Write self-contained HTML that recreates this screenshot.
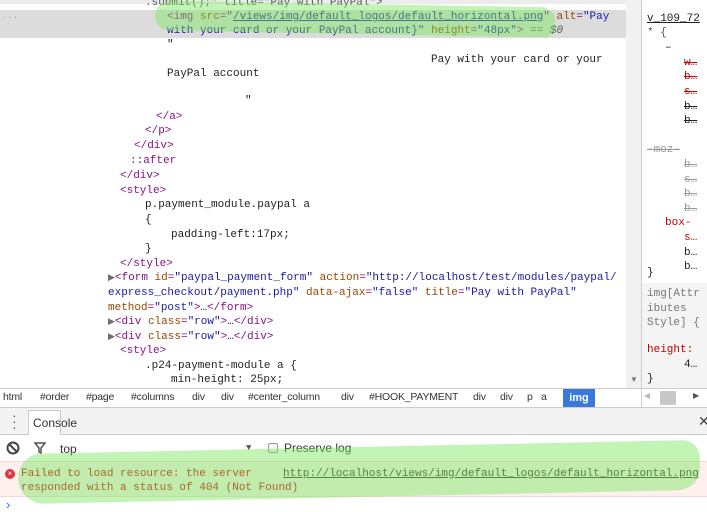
<!DOCTYPE html>
<html><head><meta charset="utf-8"><style>
*{margin:0;padding:0;box-sizing:border-box}
body{width:707px;height:511px;overflow:hidden;background:#fff;position:relative;font-family:"Liberation Mono",monospace;font-size:11px;color:#222}
.l{position:absolute;white-space:pre;line-height:14px;height:14px}
.t{color:#881280}.an{color:#994500}.av{color:#1a1aa6}.g{color:#a0a0a0}
.ln{text-decoration:underline;color:#1a1aa6}
.sans{font-family:"Liberation Sans",sans-serif}
.tri{color:#6e6e6e;font-size:9px}
.r{position:absolute;white-space:pre;line-height:14.7px;font-size:11px}
.red{color:#c80000;text-decoration:line-through}
.gr{color:#999;text-decoration:line-through}
.bc{position:absolute;top:391px;font-family:"Liberation Sans",sans-serif;font-size:10.5px;letter-spacing:-0.2px;color:#333;white-space:pre}
</style></head><body>
<div style="position:absolute;left:0;top:0;width:641px;height:4px;background:#ececec"></div>
<div style="position:absolute;left:0;top:10px;width:626px;height:28px;background:#dcdcdc"></div>
<div class="l g" style="left:2px;top:11px;font-size:9px">···</div>
<div class="l" style="left:145px;top:-4px;color:#555">.submit();" title="Pay with PayPal"&gt;</div>
<div class="l" style="left:167px;top:10px"><span class="t">&lt;img</span> <span class="an">src</span><span class="t">="</span><span class="ln">/views/img/default_logos/default_horizontal.png</span><span class="t">"</span> <span class="an">alt</span><span class="t">=</span><span class="av">"Pay</span></div>
<div class="l" style="left:167px;top:24px"><span class="av">with your card or your PayPal account}"</span> <span class="an">height</span><span class="t">=</span><span class="av">"48px"</span><span class="t">&gt;</span> <span style="color:#555">== <i>$0</i></span></div>
<div class="l" style="left:167px;top:38px">"</div>
<div class="l" style="left:431px;top:53px">Pay with your card or your</div>
<div class="l" style="left:167px;top:67px">PayPal account</div>
<div class="l" style="left:245px;top:94px">"</div>
<div class="l t" style="left:156px;top:110px">&lt;/a&gt;</div>
<div class="l t" style="left:145px;top:124px">&lt;/p&gt;</div>
<div class="l t" style="left:134px;top:139px">&lt;/div&gt;</div>
<div class="l t" style="left:130px;top:154px">::after</div>
<div class="l t" style="left:120px;top:169px">&lt;/div&gt;</div>
<div class="l t" style="left:120px;top:184px">&lt;style&gt;</div>
<div class="l" style="left:145px;top:198px">p.payment_module.paypal a</div>
<div class="l" style="left:145px;top:213px">{</div>
<div class="l" style="left:171px;top:228px">padding-left:17px;</div>
<div class="l" style="left:145px;top:242px">}</div>
<div class="l t" style="left:120px;top:257px">&lt;/style&gt;</div>
<div class="l" style="left:108px;top:271px"><span class="tri">▶</span><span class="t">&lt;form</span> <span class="an">id</span><span class="t">=</span><span class="av">"paypal_payment_form"</span> <span class="an">action</span><span class="t">=</span><span class="av">"http://localhost/test/modules/paypal/</span></div>
<div class="l av" style="left:108px;top:286px">express_checkout/payment.php" <span class="an">data-ajax</span><span class="t">=</span>"false" <span class="an">title</span><span class="t">=</span>"Pay with PayPal"</div>
<div class="l" style="left:108px;top:301px"><span class="an">method</span><span class="t">=</span><span class="av">"post"</span><span class="t">&gt;</span>…<span class="t">&lt;/form&gt;</span></div>
<div class="l" style="left:108px;top:315px"><span class="tri">▶</span><span class="t">&lt;div</span> <span class="an">class</span><span class="t">=</span><span class="av">"row"</span><span class="t">&gt;</span>…<span class="t">&lt;/div&gt;</span></div>
<div class="l" style="left:108px;top:330px"><span class="tri">▶</span><span class="t">&lt;div</span> <span class="an">class</span><span class="t">=</span><span class="av">"row"</span><span class="t">&gt;</span>…<span class="t">&lt;/div&gt;</span></div>
<div class="l t" style="left:120px;top:344px">&lt;style&gt;</div>
<div class="l" style="left:145px;top:359px">.p24-payment-module a {</div>
<div class="l" style="left:171px;top:373px">min-height: 25px;</div>
<div style="position:absolute;left:626px;top:0;width:15px;height:388px;background:#f1f1f1"></div>
<div style="position:absolute;left:630px;top:375px;font-size:8px;color:#777;font-family:'Liberation Sans'">▼</div>
<div style="position:absolute;left:641px;top:0;width:1px;height:407px;background:#ccc"></div>
<div style="position:absolute;left:642px;top:0;width:65px;height:388px;background:#fff;overflow:hidden">
<div class="r" style="left:5px;top:12px;text-decoration:underline;color:#222">v_109_72</div>
<div class="r" style="left:5px;top:26px;color:#555">* {</div>
<div class="r" style="left:23px;top:41px">–</div>
<div class="r red" style="left:42px;top:56px">w…</div>
<div class="r red" style="left:42px;top:70px">b…</div>
<div class="r red" style="left:42px;top:85px">s…</div>
<div class="r" style="left:42px;top:100px;text-decoration:line-through">b…</div>
<div class="r" style="left:42px;top:114px;text-decoration:line-through">b…</div>
<div class="r gr" style="left:5px;top:143px">-moz-</div>
<div class="r gr" style="left:42px;top:158px">b…</div>
<div class="r gr" style="left:42px;top:173px">s…</div>
<div class="r gr" style="left:42px;top:187px">b…</div>
<div class="r gr" style="left:42px;top:202px">b…</div>
<div class="r" style="left:23px;top:216px;color:#c80000">box-</div>
<div class="r" style="left:42px;top:231px;color:#c80000">s…</div>
<div class="r" style="left:42px;top:246px">b…</div>
<div class="r" style="left:42px;top:260px">b…</div>
<div class="r" style="left:5px;top:266px">}</div>
<div style="position:absolute;left:0;top:283px;width:65px;height:105px;background:#f4f4f4"></div>
<div class="r" style="left:5px;top:287px;color:#777">img[Attr<br>ibutes<br>Style] {</div>
<div class="r" style="left:5px;top:343px;color:#c80000">height:</div>
<div class="r" style="left:42px;top:358px">4…</div>
<div class="r" style="left:5px;top:372px">}</div>
</div>
<div style="position:absolute;left:0;top:388px;width:707px;height:1px;background:#ccc"></div>
<div style="position:absolute;left:0;top:389px;width:641px;height:18px;background:#fff"></div>
<div class="bc" style="left:3px">html</div>
<div class="bc" style="left:40px">#order</div>
<div class="bc" style="left:86px">#page</div>
<div class="bc" style="left:131px">#columns</div>
<div class="bc" style="left:192px">div</div>
<div class="bc" style="left:221px">div</div>
<div class="bc" style="left:248px">#center_column</div>
<div class="bc" style="left:341px">div</div>
<div class="bc" style="left:369px">#HOOK_PAYMENT</div>
<div class="bc" style="left:473px">div</div>
<div class="bc" style="left:500px">div</div>
<div class="bc" style="left:527px">p</div>
<div class="bc" style="left:541px">a</div>
<div class="sans" style="position:absolute;left:563px;top:389px;width:32px;height:18px;background:#3879d9;color:#fff;font-size:11px;font-weight:bold;text-align:center;line-height:18px">img</div>
<div style="position:absolute;left:641px;top:389px;width:1px;height:18px;background:#ccc"></div>
<div style="position:absolute;left:644px;top:391px;font-size:8px;color:#bbb">◀</div>
<div style="position:absolute;left:660px;top:391px;width:16px;height:14px;background:#c8c8c8"></div>
<div style="position:absolute;left:693px;top:391px;font-size:8px;color:#555">▶</div>
<div style="position:absolute;left:0;top:407px;width:707px;height:28px;background:#f3f3f3;border-top:1px solid #ccc;border-bottom:1px solid #ccc"></div>
<div style="position:absolute;left:12px;top:412px;font-size:14px;color:#555;font-family:'Liberation Sans';line-height:6px">·<br>·<br>·</div>
<div class="sans" style="position:absolute;left:28px;top:410px;height:25px;background:#fff;border:1px solid #ccc;border-bottom:none;font-size:12px;color:#333;line-height:24px;padding-left:4px;width:33px">Console</div>
<div class="sans" style="position:absolute;left:698px;top:413px;font-size:14px;color:#444">✕</div>
<svg style="position:absolute;left:6px;top:441px" width="14" height="14"><circle cx="7" cy="7" r="5.5" fill="none" stroke="#444" stroke-width="2"/><line x1="3" y1="3" x2="11" y2="11" stroke="#444" stroke-width="2"/></svg>
<svg style="position:absolute;left:34px;top:442px" width="12" height="12"><path d="M1 1H11L7 6V11L5 10V6Z" fill="none" stroke="#555" stroke-width="1.5"/></svg>
<div class="sans" style="position:absolute;left:60px;top:442px;font-size:12px;color:#333">top</div>
<div style="position:absolute;left:246px;top:443px;font-size:9px;color:#555">▼</div>
<div style="position:absolute;left:268px;top:443px;width:10px;height:10px;border:1px solid #999;border-radius:2px;background:#f6f6f6"></div>
<div class="sans" style="position:absolute;left:284px;top:441px;font-size:12px;color:#333">Preserve log</div>
<div style="position:absolute;left:0;top:461px;width:707px;height:36px;background:#fff0f0;border-top:1px solid #ffd6d6;border-bottom:1px solid #ffd6d6"></div>
<div style="position:absolute;left:5px;top:469px;width:10px;height:10px;border-radius:50%;background:#e0343f;color:#fff;font-size:8px;line-height:10px;text-align:center;font-family:'Liberation Sans'">×</div>
<div class="l" style="left:21px;top:467px;color:#c00">Failed to load resource: the server</div>
<div class="l" style="left:21px;top:481px;color:#c00">responded with a status of 404 (Not Found)</div>
<div class="l" style="left:283px;top:467px;color:#333;text-decoration:underline">http://localhost/views/img/default_logos/default_horizontal.png</div>
<div class="sans" style="position:absolute;left:6px;top:497px;font-size:13px;color:#2a7ae2">›</div>
<div style="position:absolute;left:155px;top:4px;width:400px;height:30px;background:rgba(120,230,90,0.45);border-radius:16px 14px 12px 16px;transform:rotate(1deg)"></div>
<div style="position:absolute;left:18px;top:447px;width:682px;height:50px;background:rgba(120,230,90,0.45);border-radius:28px 20px 26px 30px;transform:rotate(-1.2deg)"></div>
</body></html>
